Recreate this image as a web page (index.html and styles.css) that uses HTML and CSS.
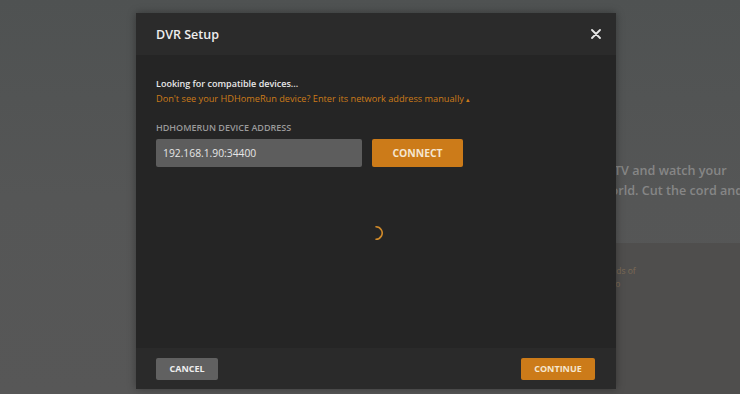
FILE: index.html
```html
<!DOCTYPE html>
<html lang="en">
<head>
<meta charset="utf-8">
<title>DVR Setup</title>
<link rel="stylesheet" href="styles.css">
</head>
<body>
<div class="page">
  <section class="hero">
    <div class="hero-text">
      <p class="hero-line">Watch live TV and watch your</p>
      <p class="hero-line hero-line-2">in the world. Cut the cord and</p>
    </div>
  </section>
  <section class="lower">
    <div class="lower-left"></div>
    <div class="lower-panel">
      <p class="lower-line">Thousands of</p>
      <p class="lower-line">Live radio</p>
    </div>
  </section>
</div>

<div class="modal" role="dialog" aria-label="DVR Setup">
  <header class="modal-header">
    <h1 class="modal-title">DVR Setup</h1>
    <button class="close-btn" aria-label="Close">
      <svg width="10" height="10" viewBox="0 0 10 10"><path d="M1 1L9 9M9 1L1 9" stroke="#e6e6e6" stroke-width="1.8" stroke-linecap="round"/></svg>
    </button>
  </header>
  <div class="modal-body">
    <p class="status">Looking for compatible devices...</p>
    <p class="manual-link">Don't see your HDHomeRun device? Enter its network address manually <span class="caret">&#9652;</span></p>
    <label class="field-label">HDHOMERUN DEVICE ADDRESS</label>
    <div class="field-row">
      <div class="address-input">192.168.1.90:34400</div>
      <button class="btn btn-primary btn-connect">CONNECT</button>
    </div>
    <div class="spinner-wrap">
      <svg class="spinner" width="16" height="16" viewBox="0 0 16 16">
        <path d="M8 1.8 A6.2 6.2 0 0 1 13.4 11 A6.2 6.2 0 0 1 8 14.2" fill="none" stroke="#d08a2a" stroke-width="1.6" stroke-linecap="round"/>
      </svg>
    </div>
  </div>
  <footer class="modal-footer">
    <button class="btn btn-secondary">CANCEL</button>
    <button class="btn btn-primary btn-continue">CONTINUE</button>
  </footer>
</div>
</body>
</html>
```

FILE: styles.css
```css
* { box-sizing: border-box; }
html, body { margin: 0; padding: 0; }
body {
  width: 740px;
  height: 394px;
  overflow: hidden;
  background: #545555;
  font-family: "Open Sans", "Liberation Sans", sans-serif;
}
p { margin: 0; }

.page {
  display: flex;
  flex-direction: column;
  height: 394px;
  background: linear-gradient(180deg, #4f5252 0%, #555656 50%, #575757 100%);
}
.hero {
  height: 243px;
  padding: 161px 0 0 548px;
}
.hero-line {
  white-space: nowrap;
  font-size: 12.6px;
  line-height: 20px;
  font-weight: 600;
  color: #868686;
}
.hero-line-2 { text-indent: 14px; }
.lower {
  flex: 1;
  display: flex;
}
.lower-left {
  width: 560px;
  flex: none;
}
.lower-panel {
  flex: 1;
  background: #4f4e4d;
  padding: 21px 0 0 22px;
}
.lower-line {
  white-space: nowrap;
  font-size: 8.5px;
  line-height: 13px;
  color: #7d6b55;
}

.modal {
  position: absolute;
  left: 136px;
  top: 13px;
  width: 480px;
  height: 376px;
  display: flex;
  flex-direction: column;
  background: #252525;
  box-shadow: 0 0 8px rgba(0,0,0,0.35);
}
.modal-header {
  height: 42px;
  flex: none;
  background: #2b2b2b;
  display: flex;
  align-items: center;
  justify-content: space-between;
  padding: 0 15px 0 20px;
}
.modal-title {
  margin: 0;
  font-size: 12.5px;
  font-weight: 600;
  color: #eeeeee;
}
.close-btn {
  background: none;
  border: 0;
  padding: 0;
  width: 10px;
  height: 10px;
  display: flex;
}

.modal-body {
  flex: 1;
  padding: 21px 20px 0 20px;
  display: flex;
  flex-direction: column;
}
.status {
  font-size: 9px;
  line-height: 15px;
  font-weight: 600;
  color: #e8e8e8;
}
.manual-link {
  font-size: 9.2px;
  line-height: 15px;
  color: #cc7b19;
}
.caret { font-size: 7px; }
.field-label {
  margin-top: 14px;
  font-size: 9px;
  line-height: 13px;
  font-weight: 600;
  color: #9a9a9a;
}
.field-row {
  margin-top: 5px;
  display: flex;
  gap: 10px;
}
.address-input {
  width: 206px;
  height: 28px;
  background: #5d5d5d;
  border-radius: 2px;
  padding: 0 7px;
  display: flex;
  align-items: center;
  font-size: 10.3px;
  color: #e6e6e6;
}
.btn {
  border: 0;
  border-radius: 2px;
  font-family: "Open Sans", "Liberation Sans", sans-serif;
  font-weight: 700;
  display: flex;
  align-items: center;
  justify-content: center;
  padding: 0;
}
.btn-primary { background: #cc7b19; color: #f5e6cf; }
.btn-secondary { background: #616161; color: #eeeeee; }
.btn-connect {
  width: 91px;
  height: 28px;
  font-size: 10.4px;
}
.spinner-wrap {
  margin-top: 58px;
  display: flex;
  justify-content: center;
}

.modal-footer {
  height: 41px;
  flex: none;
  background: #2a2a2a;
  display: flex;
  align-items: center;
  justify-content: space-between;
  padding: 0 21px 0 20px;
}
.modal-footer .btn {
  height: 22px;
  font-size: 9px;
}
.btn-secondary { width: 62px; }
.btn-continue { width: 74px; }
```
